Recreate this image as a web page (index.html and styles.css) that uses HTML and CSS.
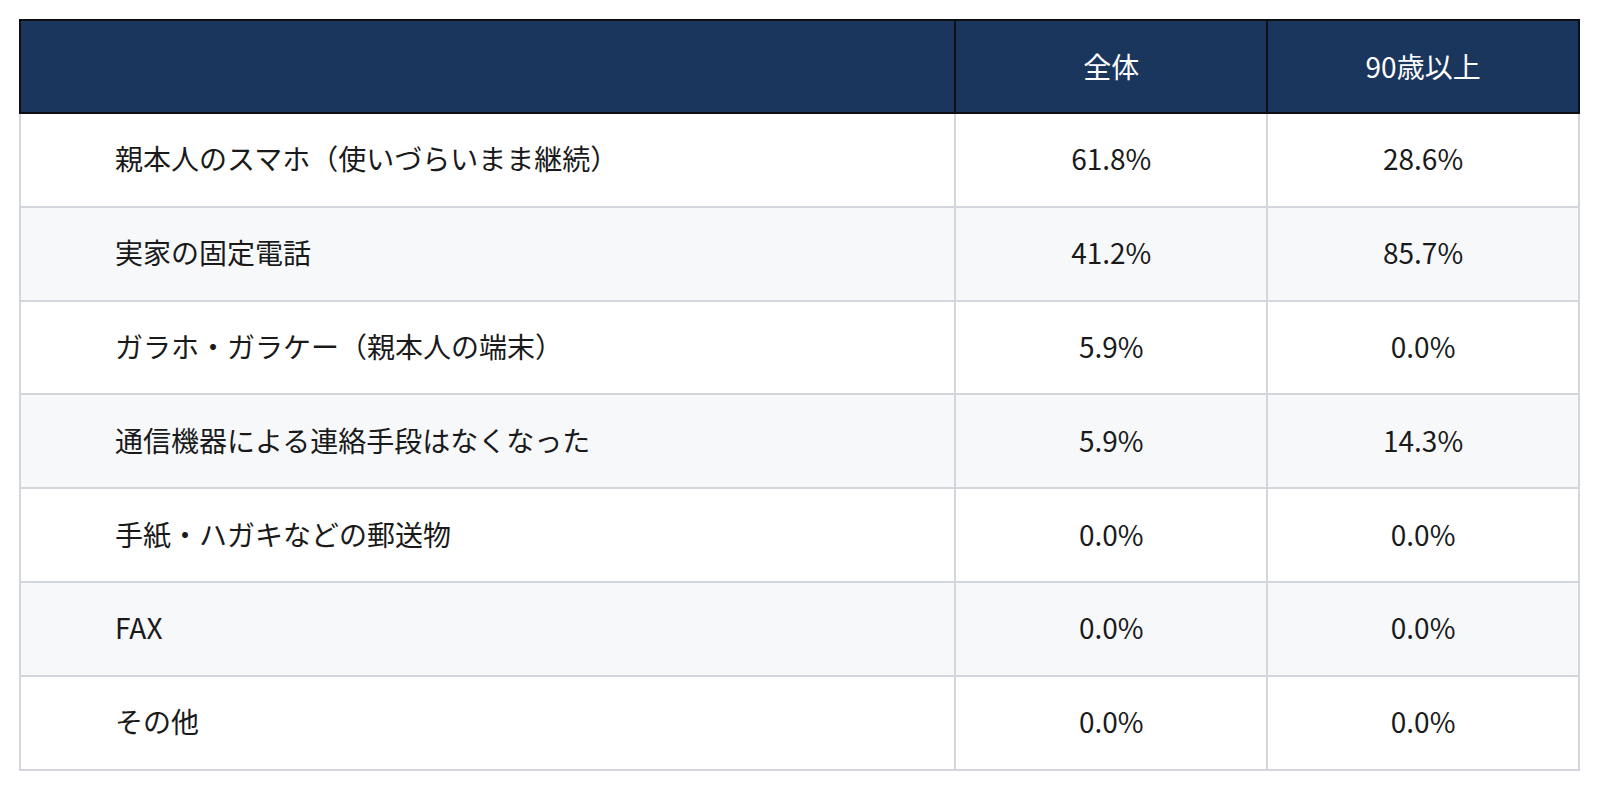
FILE: index.html
```html
<!DOCTYPE html>
<html lang="ja">
<head>
<meta charset="utf-8">
<title>連絡手段</title>
<link rel="stylesheet" href="styles.css">
</head>
<body>
<div class="wrap">
<table class="data">
  <colgroup>
    <col class="c-label">
    <col class="c-val">
    <col class="c-val">
  </colgroup>
  <thead>
    <tr>
      <th class="h-label"></th>
      <th>全体</th>
      <th>90歳以上</th>
    </tr>
  </thead>
  <tbody>
    <tr><td class="label">親本人のスマホ（使いづらいまま継続）</td><td>61.8%</td><td>28.6%</td></tr>
    <tr class="alt"><td class="label">実家の固定電話</td><td>41.2%</td><td>85.7%</td></tr>
    <tr><td class="label">ガラホ・ガラケー（親本人の端末）</td><td>5.9%</td><td>0.0%</td></tr>
    <tr class="alt"><td class="label">通信機器による連絡手段はなくなった</td><td>5.9%</td><td>14.3%</td></tr>
    <tr><td class="label">手紙・ハガキなどの郵送物</td><td>0.0%</td><td>0.0%</td></tr>
    <tr class="alt"><td class="label">FAX</td><td>0.0%</td><td>0.0%</td></tr>
    <tr><td class="label">その他</td><td>0.0%</td><td>0.0%</td></tr>
  </tbody>
</table>
</div>
</body>
</html>
```
FILE: styles.css
```css
html, body {
  margin: 0;
  padding: 0;
  background: #ffffff;
}
body {
  font-family: "Noto Sans CJK JP", "Noto Sans", sans-serif;
  color: #1a1a1a;
}
.wrap {
  padding: 19px 0 0 19px;
}
.data {
  width: 1561px;
  border-collapse: collapse;
  table-layout: fixed;
  font-size: 28px;
}
.c-label { width: 60%; }
.c-val { width: 20%; }
.data th {
  background: #1b365d;
  color: #ffffff;
  font-weight: 400;
  height: 89px;
  border: 2px solid #0d0f14;
  text-align: center;
  vertical-align: middle;
  padding: 0 0 2px;
}
.data td {
  height: 88.8px;
  border: 2px solid #d3d6dd;
  text-align: center;
  vertical-align: middle;
  padding: 0 0 3px;
  background: #ffffff;
}
.data tr.alt td {
  background: #f7f8fa;
}
.data td.label {
  text-align: left;
  padding-left: 94px;
}
```
